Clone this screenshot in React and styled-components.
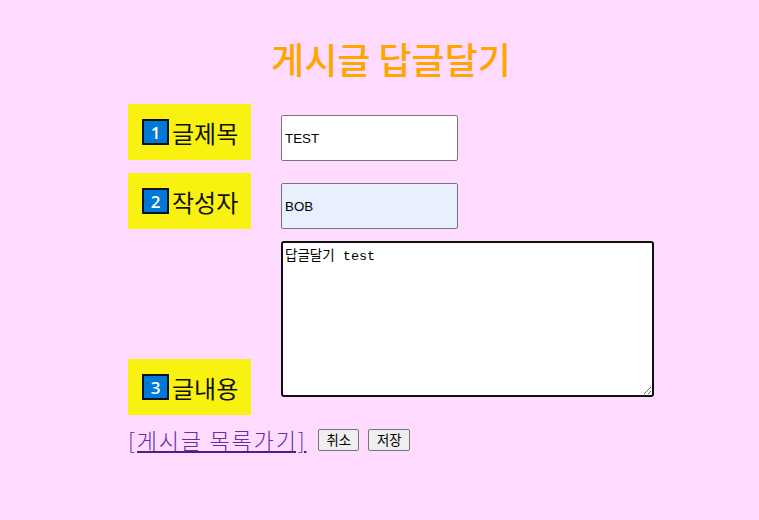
import React from "react";
import styled, { createGlobalStyle } from "styled-components";

const Global = createGlobalStyle`
  html, body { background: #ffdbff; }
  body {
    margin: 8px;
    font-family: "Noto Sans CJK KR", "Liberation Sans", sans-serif;
    min-height: 504px;
  }
`;

const Wrapper = styled.div`
  margin-left: 120px;
  width: 526px;
`;

const Title = styled.h1`
  margin: 25px 0 21px;
  text-align: center;
  font-size: 36px;
  line-height: 50px;
  font-weight: 500;
  color: #ffa500;
  font-family: "Noto Sans CJK KR", sans-serif;
`;

const FormGrid = styled.div`
  display: grid;
  grid-template-columns: 123px 373px;
  column-gap: 30px;
  row-gap: 12px;
  align-items: end;
`;

const Label = styled.div`
  height: 56px;
  box-sizing: border-box;
  display: flex;
  align-items: center;
  padding: 0 10px 0 14px;
  margin-bottom: ${(p) => p.$lift || 0}px;
  background: #f9f10f;
  color: #111;
  font-size: 24px;
  font-family: "Noto Sans CJK KR", sans-serif;
`;

const Badge = styled.span`
  width: 27px;
  height: 26px;
  box-sizing: border-box;
  display: inline-flex;
  align-items: center;
  justify-content: center;
  background: #0078d7;
  border: 2px solid #111;
  color: #fff;
  font-family: "Open Sans", "Noto Sans", sans-serif;
  font-size: 17px;
  font-weight: 600;
  line-height: 1;
  margin-right: 3px;
`;

const TextInput = styled.input`
  width: 177px;
  height: 46px;
  box-sizing: border-box;
  border: 1px solid #767676;
  border-radius: 2px;
  padding: 1px 3px;
  font-family: "Liberation Sans", Arial, sans-serif;
  font-size: 13.33px;
  color: #000;
  background: ${(p) => (p.$filled ? "#e8f0fe" : "#fff")};
  outline: none;
`;

const TextArea = styled.textarea`
  width: 373px;
  height: 156px;
  box-sizing: border-box;
  margin: 0 0 18px;
  border: 2px solid #101010;
  border-radius: 3px;
  padding: 1px 2px;
  font-family: "Liberation Mono", "Noto Sans CJK KR", monospace;
  font-size: 13.5px;
  color: #000;
  background: #fff;
  resize: both;
  outline: none;
`;

const BottomRow = styled.div`
  display: flex;
  align-items: flex-start;
  margin-top: 9px;
`;

const BackLink = styled.a`
  font-size: 22px;
  line-height: 30px;
  letter-spacing: 1.8px;
  color: #6a2c9e;
  text-decoration: underline;
  text-decoration-color: #551a8b;
  font-family: "Noto Sans CJK KR", sans-serif;
  font-weight: 300;
  margin-right: 12px;
  cursor: pointer;
`;

const Button = styled.button`
  height: 22px;
  margin-top: 5px;
  box-sizing: border-box;
  font-family: "Noto Sans CJK KR", "Liberation Sans", sans-serif;
  font-size: 13.33px;
  line-height: 18px;
  padding: 1px ${(p) => (p.$wide ? 8 : 7)}px;
  border: 1px solid #767676;
  border-radius: 2px;
  background: #efefef;
  color: #000;
  margin-right: 9px;
`;

export default function App() {
  return (
    <>
      <Global />
      <Wrapper>
        <Title>게시글 답글달기</Title>
        <FormGrid>
          <Label $lift={1}>
            <Badge>1</Badge>글제목
          </Label>
          <TextInput defaultValue="TEST" />
          <Label>
            <Badge>2</Badge>작성자
          </Label>
          <TextInput $filled defaultValue="BOB" />
          <Label>
            <Badge>3</Badge>글내용
          </Label>
          <TextArea defaultValue="답글달기 test" spellCheck={false} />
        </FormGrid>
        <BottomRow>
          <BackLink>[게시글 목록가기]</BackLink>
          <Button>취소</Button>
          <Button $wide>저장</Button>
        </BottomRow>
      </Wrapper>
    </>
  );
}
